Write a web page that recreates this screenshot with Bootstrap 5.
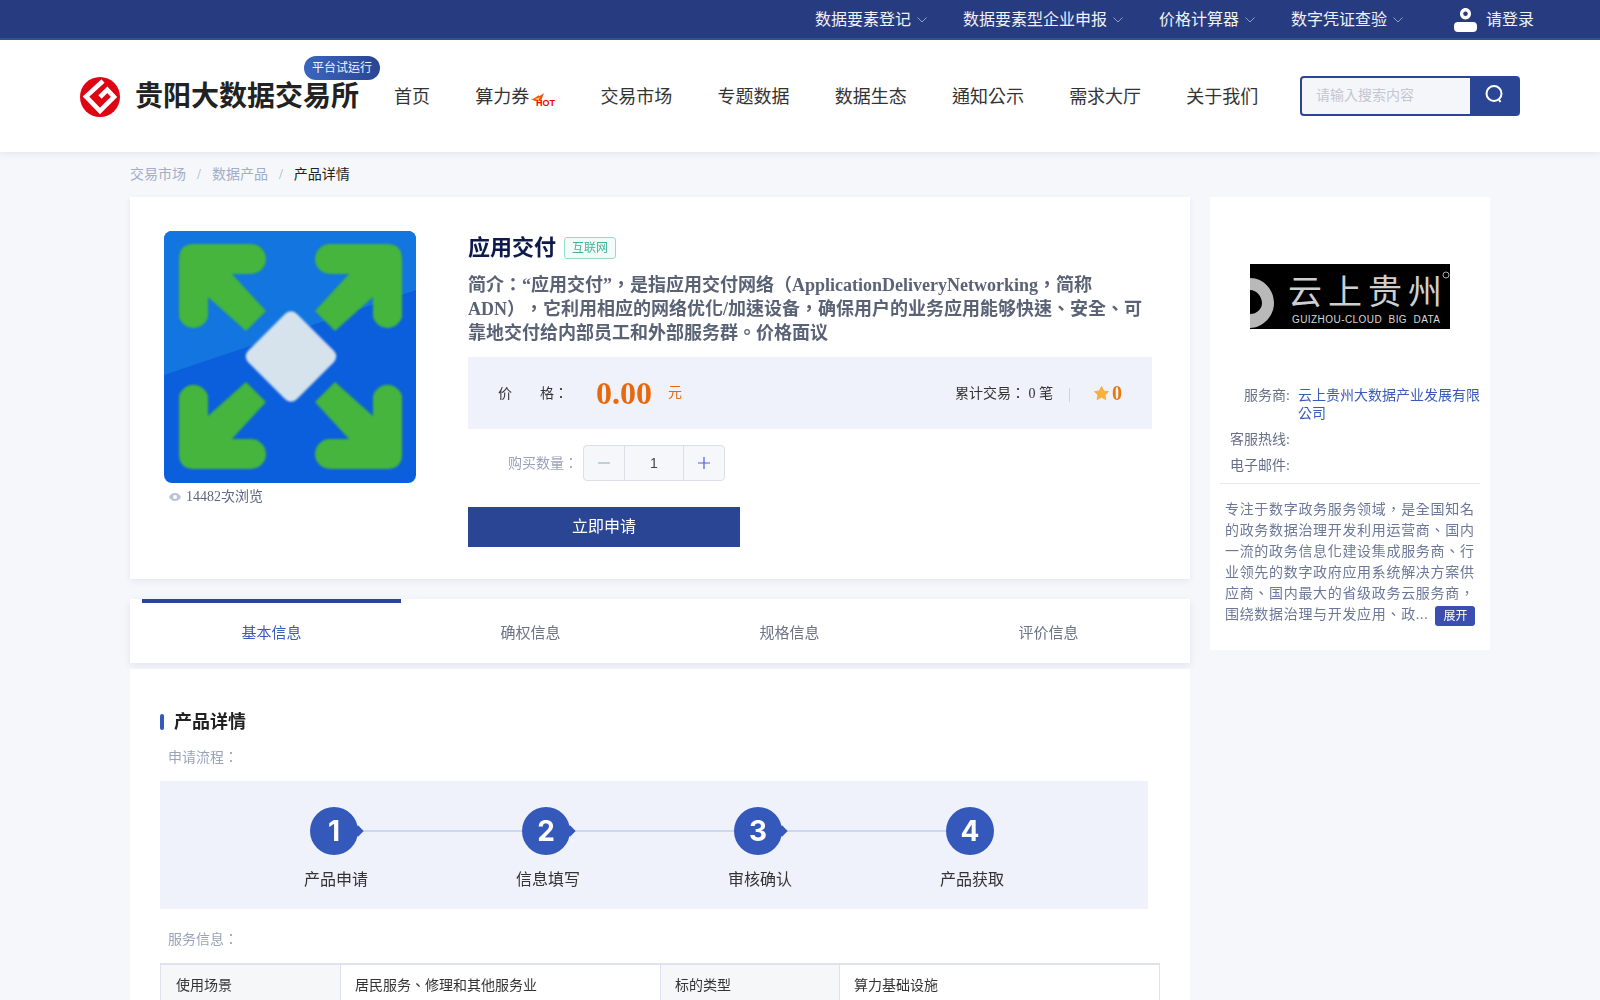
<!DOCTYPE html>
<html>
<head>
<meta charset="utf-8">
<title>应用交付</title>
<link href="https://cdn.jsdelivr.net/npm/bootstrap@5.3.0/dist/css/bootstrap.min.css" rel="stylesheet">
<style>
body{background:#f5f7fb;font-family:"Liberation Serif","Noto Sans CJK TC",serif;font-size:14px;color:#333;min-width:1600px;text-spacing-trim:space-all;font-feature-settings:"chws" 0}
.topbar{height:40px;background:#273c80;border-bottom:2px solid #2a5a86;color:#f0f2f8;font-size:16px;padding:1px 66px 0 0}
.topitem{margin-right:36px}
.chev{width:10px;height:6px;margin-left:6px}
.userico{width:23px;height:24px;margin-left:51px;margin-right:9px}
.mainhead{height:112px;background:#fff;box-shadow:0 2px 6px rgba(40,50,90,.08);padding-left:80px;padding-top:2px}
.brand{width:314px;flex:none}
.brandname{font-size:28px;font-weight:700;color:#222;margin-left:15px;line-height:40px;white-space:nowrap}
.trial{position:absolute;left:224px;top:-21px;width:76px;height:24px;border-radius:12px;background:linear-gradient(90deg,#3a66bf,#2a4593);color:#f1f4ff;font-size:12px;line-height:24px;text-align:center}
.navlist{font-size:18px;color:#333;gap:45.2px;width:864px;flex:none;white-space:nowrap}
.hotmark{flex:none}
.searchbox{width:220px;height:40px;border:2px solid #2b4595;border-radius:4px;background:#f5f6fa;margin-left:42px;margin-top:-2px;flex:none}
.searchtext{font-size:14px;color:#c3c6d3;padding-left:14px;line-height:36px}
.searchbtn{width:48px;background:#2b4595}
.crumbs{height:45px;padding-left:130px;font-size:14px;color:#a3adc8}
.crumbs .sep{margin:0 11px;color:#a3adc8}
.crumbs .now{color:#222}
.pagecols{padding-left:130px;gap:20px}
.leftcol{width:1060px}
.rightcol{width:280px;height:453px;background:#fff;padding-top:67px}
.prodcard{height:382px;background:#fff;box-shadow:0 2px 6px rgba(40,50,90,.08);padding:34px 0 0 34px}
.picwrap{width:252px}
.views{color:#5d6680;font-size:14px;margin:5px 0 0 5px;line-height:18px}
.viewico{margin-right:5px}
.infocol{margin-left:52px;width:684px}
.prodname{font-size:22px;font-weight:700;color:#0e1a4b;line-height:34px}
.nettag{font-size:12px;color:#3fb597;border:1px solid #96dcc8;background:#f3fbf8;border-radius:3px;height:22px;line-height:20px;padding:0 7px;margin-left:8px;margin-top:6px}
.intro{font-size:18px;font-weight:700;line-height:24px;color:#5a6275;margin-top:8px}
.pricebar{height:72px;background:#eff2fb;margin-top:12px;padding:0 30px}
.pricelab{width:70px;color:#333;font-size:14px;display:flex;justify-content:space-between;margin-right:28px}
.pricenum{font-size:32px;font-weight:700;color:#e8690c;line-height:36px}
.priceunit{font-size:14px;color:#e8690c;margin-left:16px;line-height:20px}
.deals{font-size:14px;color:#333}
.dealsep{width:1px;height:14px;background:#f3cf9f;margin:4px 24px 0 16px}
.starnum{font-size:20px;font-weight:700;color:#e8790c;line-height:20px;margin-left:3px}
.qtyrow{margin-top:16px;height:36px}
.qtylab{width:110px;margin-right:5px;text-align:right;color:#9aa3b8;font-size:14px;white-space:nowrap}
.stepper{width:142px;height:36px;border:1px solid #dcdfe8;border-radius:4px;background:#f5f7fa}
.stepbtn{width:40px;font-size:20px;line-height:1;font-family:"Liberation Sans",sans-serif}
.stepval{width:60px;border-left:1px solid #dcdfe8;border-right:1px solid #dcdfe8;font-family:"Liberation Sans",sans-serif;font-size:14px;color:#444}
.applybtn{width:272px;height:40px;background:#2b4595;border-radius:0;color:#fff;font-size:16px;margin-top:26px;border:0;padding:0}
.applybtn:hover{background:#2b4595;color:#fff}
.tabbar{height:64px;background:#fff;margin-top:20px;padding:0 12px;box-shadow:0 3px 8px rgba(40,50,90,.09)}
.tabitem{width:259px;height:64px;font-size:15px;color:#6b7385;border-top:4px solid transparent}
.tabitem.sel{border-top-color:#2b4595;color:#3a5bb8}
.detailcard{background:#fff;margin-top:6px;padding:40px 0 40px 30px}
.sechead{font-size:18px;font-weight:700;color:#222;line-height:26px}
.secbar{width:4px;height:16px;background:#3558bb;border-radius:2px;margin-right:10px}
.subhead{font-size:14px;color:#9aa3b8;margin:13px 0 0 8px;line-height:20px}
.flowpanel{width:988px;height:128px;background:#eff2fb;margin-top:13px;padding:26px 0 0 150px}
.flowstep{width:212px;flex:none}
.flowdot{width:48px;height:48px;border-radius:50%;background:#3558bb;color:#fff;font-family:Inter,"Liberation Sans",sans-serif;font-weight:700;font-size:28px;position:relative;flex:none}
.flowdot.arrowed::after{content:"";position:absolute;right:-4px;top:20px;width:8px;height:8px;background:#3558bb;transform:rotate(45deg)}
.flowline{height:2px;background:#cdd7f1;flex:1}
.flowname{width:80px;margin:11px 0 0 -14px;text-align:center;font-size:16px;line-height:24px;color:#333;font-family:"Noto Sans CJK TC",sans-serif}
.specs{width:999px;margin:13px 0 0 0;border-collapse:collapse;table-layout:fixed;font-size:14px;color:#333}
.specs td{border:1px solid #dfe2ee;height:44px;padding:0 14px 2px}
.specs td:first-child{padding-left:15px}
.specs td.keycell{background:#f6f7f9}
.specs tr td{border-top-width:2px}
.supbox{height:65px}
.suprows{padding:0 10px 0 0;margin-top:58px}
.suprow{line-height:18px;margin-bottom:8px;font-size:14px}
.suplab{width:80px;text-align:right;color:#667088;flex:none}
.supval{margin-left:8px;color:#3a5bb8}
.suprule{height:1px;background:#e8e9ee;margin:8px 10px 0}
.supdesc{padding:0 15px;margin-top:16px;line-height:20.9px;letter-spacing:.68px;color:#6c7899;font-size:14px;white-space:nowrap}
.morebtn{display:inline-block;width:40px;height:20px;background:#3a4fb0;border-radius:3px;color:#fff;font-size:12px;line-height:20px;text-align:center;letter-spacing:0;margin-left:7px;vertical-align:top;margin-top:1px}
.logoline{white-space:pre}
</style>
</head>
<body>
<div class="topbar d-flex align-items-center justify-content-end">
  <div class="topitem d-flex align-items-center">数据要素登记<svg class="chev" viewBox="0 0 10 6"><path d="M.5.5 5 5 9.500.5" fill="none" stroke="#8f9ec6"/></svg></div>
  <div class="topitem d-flex align-items-center">数据要素型企业申报<svg class="chev" viewBox="0 0 10 6"><path d="M.5.5 5 5 9.500.5" fill="none" stroke="#8f9ec6"/></svg></div>
  <div class="topitem d-flex align-items-center">价格计算器<svg class="chev" viewBox="0 0 10 6"><path d="M.5.5 5 5 9.500.5" fill="none" stroke="#8f9ec6"/></svg></div>
  <div class="d-flex align-items-center">数字凭证查验<svg class="chev" viewBox="0 0 10 6"><path d="M.5.5 5 5 9.500.5" fill="none" stroke="#8f9ec6"/></svg></div>
  <svg class="userico" viewBox="0 0 23 24"><path fill="#fff" fill-rule="evenodd" d="M11.500 0c3 0 5.500 2.500 5.500 5.800s-2.500 5.700-5.500 5.700S6 9 6 5.800 8.500 0 11.500 0Zm0 3.500a2.300 2.300 0 1 0 0 4.600 2.300 2.300 0 0 0 0-4.600ZM4 14h15a4 4 0 0 1 4 4v2a4 4 0 0 1-4 4H4a4 4 0 0 1-4-4v-2a4 4 0 0 1 4-4Z"/></svg>
  <div>请登录</div>
</div>

<div class="mainhead d-flex align-items-center">
  <div class="brand d-flex align-items-center position-relative">
    <svg width="40" height="40" viewBox="0 0 40 40"><circle cx="20" cy="20" r="20" fill="#dd0612"/><path d="M23 4 6 19.500 20 34 34 20 27.300 12.800 20 20" fill="none" stroke="#fff" stroke-width="4.600"/></svg>
    <div class="brandname">贵阳大数据交易所</div>
    <div class="trial">平台试运行</div>
  </div>
  <div class="navlist d-flex align-items-center">
    <div>首页</div>
    <div class="d-flex align-items-center">算力券<svg class="hotmark" width="26" height="22" viewBox="0 0 26 22"><path d="M2 13C5 13 7 11 10 9 9 10.500 11 10.500 15 7 14 10 13 12 12 15H6Z" fill="#f2530f"/><path d="M6 13C8 12 9 11.500 11 11.500 10 12.500 10 14 9.500 15Z" fill="#fdc04a"/><text x="7" y="19.500" font-family="Liberation Sans,sans-serif" font-size="9" font-weight="700" fill="#f00000" textLength="19" lengthAdjust="spacingAndGlyphs">HOT</text></svg></div>
    <div>交易市场</div>
    <div>专题数据</div>
    <div>数据生态</div>
    <div>通知公示</div>
    <div>需求大厅</div>
    <div>关于我们</div>
  </div>
  <div class="searchbox d-flex">
    <div class="searchtext flex-grow-1">请输入搜索内容</div>
    <div class="searchbtn d-flex align-items-center justify-content-center">
      <svg width="20" height="20" viewBox="0 0 20 20" class="mb-1"><circle cx="10" cy="9.500" r="7.500" fill="none" stroke="#fff" stroke-width="2"/><path d="M14.500 15 16.500 18" stroke="#fff" stroke-width="2"/></svg>
    </div>
  </div>
</div>

<div class="crumbs d-flex align-items-center"><span>交易市场</span><span class="sep">/</span><span>数据产品</span><span class="sep">/</span><span class="now">产品详情</span></div>

<div class="pagecols d-flex align-items-start">
  <div class="leftcol">
    <div class="prodcard d-flex">
      <div class="picwrap">
        <svg class="d-block" width="252" height="252" viewBox="0 0 252 252">
          <defs><clipPath id="pc"><rect width="252" height="252" rx="8"/></clipPath>
          <path id="ar" d="M28 13H87a15 15 0 0 1 0 30H68L102 80 82 100 44 66V86a15 15 0 0 1-29 0V28Q15 13 30 13Z"/>
          <filter id="sb"><feGaussianBlur stdDeviation="1"/></filter></defs>
          <g clip-path="url(#pc)">
            <rect width="252" height="252" fill="#0c5fdc"/>
            <path d="M0 0H252V59L0 144Z" fill="#1275e0"/>
            <g fill="#44b53e" filter="url(#sb)">
              <use href="#ar"/>
              <use href="#ar" transform="matrix(-1 0 0 1 253 0)"/>
              <use href="#ar" transform="matrix(1 0 0 -1 0 251)"/>
              <use href="#ar" transform="matrix(-1 0 0 -1 253 251)"/>
              <path d="M121 83a8 8 0 0 1 12 0l37 37a8 8 0 0 1 0 11l-37 37a8 8 0 0 1-12 0L84 131a8 8 0 0 1 0-11Z" fill="#d6e2ec"/>
            </g>
          </g>
        </svg>
        <div class="views d-flex align-items-center"><svg class="viewico" width="12" height="8" viewBox="0 0 12 8"><path fill-rule="evenodd" d="M6 0c3 0 5 2 6 4-1 2-3 4-6 4S1 6 0 4c1-2 3-4 6-4Zm0 2a2 2 0 1 0 0 4 2 2 0 0 0 0-4Z" fill="#bcc3d6"/></svg><span>14482次浏览</span></div>
      </div>
      <div class="infocol">
        <div class="d-flex align-items-start"><div class="prodname">应用交付</div><div class="nettag">互联网</div></div>
        <div class="intro">简介：“应用交付”，是指应用交付网络（ApplicationDeliveryNetworking，简称ADN），它利用相应的网络优化/加速设备，确保用户的业务应用能够快速、安全、可靠地交付给内部员工和外部服务群。价格面议</div>
        <div class="pricebar d-flex align-items-center">
          <div class="pricelab"><span>价</span><span>格：</span></div>
          <div class="pricenum">0.00</div>
          <div class="priceunit">元</div>
          <div class="ms-auto deals">累计交易： 0 笔</div>
          <div class="dealsep"></div>
          <svg width="15" height="14" viewBox="0 0 15 14"><path d="M7.500.5 9.700 5l4.800.6-3.500 3.300.9 4.700-4.400-2.300-4.400 2.300.9-4.700L.5 5.600 5.300 5Z" fill="#f9b13c" stroke="#f9b13c" stroke-linejoin="round"/></svg>
          <div class="starnum">0</div>
        </div>
        <div class="qtyrow d-flex align-items-center">
          <div class="qtylab">购买数量：</div>
          <div class="stepper d-flex align-items-center text-center">
            <div class="stepbtn"><svg width="12" height="2" viewBox="0 0 12 2" class="d-block mx-auto"><path d="M0 1h12" stroke="#9aa3b8"/></svg></div>
            <div class="stepval h-100 d-flex align-items-center justify-content-center">1</div>
            <div class="stepbtn"><svg width="12" height="12" viewBox="0 0 12 12" class="d-block mx-auto"><path d="M0 6h12M6 0v12" stroke="#4a62d8" stroke-width="1.200"/></svg></div>
          </div>
        </div>
        <button class="btn applybtn" type="button">立即申请</button>
      </div>
    </div>

    <div class="tabbar d-flex text-center">
      <div class="tabitem sel d-flex align-items-center justify-content-center">基本信息</div>
      <div class="tabitem d-flex align-items-center justify-content-center">确权信息</div>
      <div class="tabitem d-flex align-items-center justify-content-center">规格信息</div>
      <div class="tabitem d-flex align-items-center justify-content-center">评价信息</div>
    </div>

    <div class="detailcard">
      <div class="sechead d-flex align-items-center"><span class="secbar"></span>产品详情</div>
      <div class="subhead">申请流程：</div>
      <div class="flowpanel d-flex">
        <div class="flowstep"><div class="d-flex align-items-center"><div class="flowdot arrowed d-flex align-items-center justify-content-center">1</div><div class="flowline"></div></div><div class="flowname">产品申请</div></div>
        <div class="flowstep"><div class="d-flex align-items-center"><div class="flowdot arrowed d-flex align-items-center justify-content-center">2</div><div class="flowline"></div></div><div class="flowname">信息填写</div></div>
        <div class="flowstep"><div class="d-flex align-items-center"><div class="flowdot arrowed d-flex align-items-center justify-content-center">3</div><div class="flowline"></div></div><div class="flowname">审核确认</div></div>
        <div class="flowstep"><div class="d-flex align-items-center"><div class="flowdot d-flex align-items-center justify-content-center">4</div></div><div class="flowname">产品获取</div></div>
      </div>
      <div class="subhead" style="margin-top:21px">服务信息：</div>
      <table class="specs">
        <colgroup><col style="width:180px"><col style="width:320px"><col style="width:179px"><col style="width:320px"></colgroup>
        <tr><td class="keycell">使用场景</td><td>居民服务、修理和其他服务业</td><td class="keycell">标的类型</td><td>算力基础设施</td></tr>
      </table>
    </div>
  </div>

  <aside class="rightcol">
    <div class="supbox d-flex justify-content-center">
      <svg width="200" height="65" viewBox="0 0 200 65">
        <rect width="200" height="65" fill="#000"/>
        <path d="M0 14C14 14 24 26 24 39 24 53 12 64 0 64V50C7 50 12 45 12 39 12 33 7 26 0 26Z" fill="#b9b9b9"/>
        <text x="38" y="40" font-family="Noto Sans CJK SC,sans-serif" font-size="34" fill="#cfcfcf" textLength="154" lengthAdjust="spacing">云上贵州</text>
        <text class="logoline" x="42" y="59" font-family="Liberation Sans,sans-serif" font-size="10" fill="#d8d8d8" textLength="148" lengthAdjust="spacing">GUIZHOU-CLOUD  BIG  DATA</text>
        <circle cx="196" cy="11" r="3" fill="none" stroke="#aaa"/>
      </svg>
    </div>
    <div class="suprows">
      <div class="suprow d-flex"><div class="suplab">服务商:</div><div class="supval">云上贵州大数据产业发展有限公司</div></div>
      <div class="suprow d-flex"><div class="suplab">客服热线:</div></div>
      <div class="suprow d-flex mb-0"><div class="suplab">电子邮件:</div></div>
    </div>
    <div class="suprule"></div>
    <div class="supdesc">专注于数字政务服务领域，是全国知名<br>的政务数据治理开发利用运营商、国内<br>一流的政务信息化建设集成服务商、行<br>业领先的数字政府应用系统解决方案供<br>应商、国内最大的省级政务云服务商，<br>围绕数据治理与开发应用、政...<span class="morebtn">展开</span></div>
  </aside>
</div>
<script src="https://cdn.jsdelivr.net/npm/bootstrap@5.3.0/dist/js/bootstrap.bundle.min.js"></script>
</body>
</html>
